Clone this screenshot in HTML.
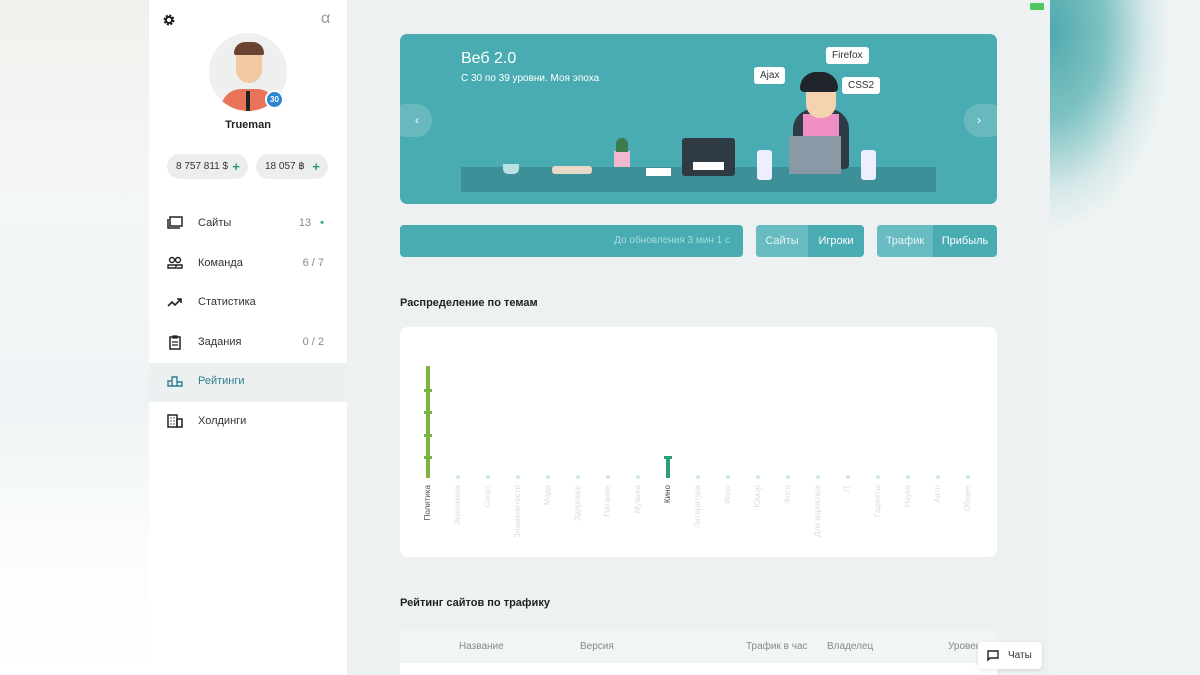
<!DOCTYPE html>
<html><head><meta charset="utf-8"><style>
*{margin:0;padding:0;box-sizing:border-box}
body{width:1200px;height:675px;overflow:hidden;position:relative;font-family:"Liberation Sans","DejaVu Sans",sans-serif;background:#f7f8f8}
.leftbg{position:absolute;left:0;top:0;width:150px;height:675px;background:linear-gradient(180deg,#f1f0ec 0%,#f4f7f7 30%,#eef4f5 60%,#fbfcfc 80%,#fff 100%)}
.rightbg{position:absolute;left:1050px;top:0;width:150px;height:675px;background:radial-gradient(ellipse 120px 200px at 0px 30px,#4fa9ad 0%,#7fc2c3 45%,#d6e8e9 80%,#eef3f3 100%),#eef3f3}
.side{position:absolute;left:149px;top:0;width:198px;height:675px;background:#fff}
.main{position:absolute;left:347px;top:0;width:703px;height:675px;background:#edf1f1}
.t{position:absolute;white-space:nowrap}
.pill{position:absolute;top:154px;height:25px;border-radius:13px;background:#eceeee;font-size:10px;color:#333;line-height:25px;padding-left:9px}
.pill b{color:#2a9d6e;font-weight:bold;position:absolute;right:8px;font-size:13px}
.nav{position:absolute;left:0;width:198px;height:39px;font-size:11px;color:#333}
.nav span{position:absolute;left:49px;top:12px}
.nav i{position:absolute;right:23px;top:12px;font-style:normal;color:#888}
.nav svg{position:absolute;left:18px;top:11px}
.banner{position:absolute;left:400px;top:34px;width:597px;height:170px;border-radius:7px;background:#49acb2;overflow:hidden}
.bar{position:absolute;top:225px;height:32px;border-radius:4px;background:#49acb2;color:#fff;font-size:11px;line-height:32px}
.card{position:absolute;left:400px;top:327px;width:597px;height:230px;background:#fff;border-radius:8px}
.bubble{position:absolute;background:#fff;color:#333;font-size:10px;padding:3px 6px;border-radius:3px}
.lab{position:absolute;top:485px;transform-origin:0 0;transform:rotate(-90deg) translateX(-100%);font-size:8px;color:#ddd;white-space:nowrap}
.dot{position:absolute;top:475px;width:4px;height:4px;border-radius:2px;background:#cde7e3}
</style></head><body>
<div class="leftbg"></div><div class="rightbg"></div>
<div class="side">
 <svg class="t" style="left:13px;top:13px" width="14" height="14" viewBox="0 0 14 14"><circle cx="7" cy="7" r="4.2" fill="none" stroke="#222" stroke-width="2.6" stroke-dasharray="2 1.3"/><circle cx="7" cy="7" r="3" fill="none" stroke="#222" stroke-width="2"/></svg>
 <div class="t" style="left:172px;top:10px;font-size:16px;color:#999">α</div>
 <div class="t" style="left:60px;top:33px;width:78px;height:78px;border-radius:50%;background:#eef0f0;overflow:hidden">
  <div class="t" style="left:12px;top:56px;width:56px;height:30px;border-radius:20px 20px 0 0;background:#e8745a"></div>
  <div class="t" style="left:37px;top:58px;width:4px;height:20px;background:#222"></div>
  <div class="t" style="left:27px;top:14px;width:26px;height:36px;border-radius:10px 10px 13px 13px;background:#f2c9a0"></div>
  <div class="t" style="left:25px;top:9px;width:30px;height:13px;border-radius:12px 12px 2px 2px;background:#6b4330"></div>
 </div>
 <div class="t" style="left:116px;top:90px;width:19px;height:19px;border-radius:50%;background:#2a86d1;color:#fff;font-size:8px;font-weight:bold;text-align:center;line-height:15px;border:2px solid #fff">30</div>
 <div class="t" style="left:0;width:198px;text-align:center;top:119px;font-size:11px;font-weight:bold;color:#222">Trueman</div>
 <div class="pill" style="left:18px;width:81px">8 757 811 $<b>+</b></div>
 <div class="pill" style="left:107px;width:72px">18 057 ฿<b>+</b></div>
 <div class="nav" style="top:205px"><svg width="16" height="14" viewBox="0 0 16 14"><rect x="3" y="1" width="12" height="9" fill="none" stroke="#222" stroke-width="1.5"/><path d="M1 3v9h12" fill="none" stroke="#222" stroke-width="1.5"/></svg><span>Сайты</span><i>13 <b style="color:#3aaa80;margin-left:6px">•</b></i></div>
 <div class="nav" style="top:245px"><svg width="16" height="14" viewBox="0 0 16 14"><circle cx="5" cy="4" r="2.5" fill="none" stroke="#222" stroke-width="1.4"/><circle cx="11" cy="4" r="2.5" fill="none" stroke="#222" stroke-width="1.4"/><path d="M1 12v-3h8v3zM9 9h6v3h-5" fill="none" stroke="#222" stroke-width="1.4"/></svg><span>Команда</span><i>6 / 7</i></div>
 <div class="nav" style="top:284px"><svg width="16" height="14" viewBox="0 0 16 14"><path d="M1 11l4-4 3 3 6-6M10 4h4v4" fill="none" stroke="#222" stroke-width="1.6"/></svg><span>Статистика</span></div>
 <div class="nav" style="top:324px"><svg width="16" height="15" viewBox="0 0 16 15"><rect x="3" y="2" width="10" height="12" fill="none" stroke="#222" stroke-width="1.5"/><path d="M6 1h4v2H6zM5 7h6M5 10h6" stroke="#222" stroke-width="1.3" fill="none"/></svg><span>Задания</span><i>0 / 2</i></div>
 <div class="nav" style="top:363px;background:#ecf0f0;color:#2f7f93"><svg width="16" height="14" viewBox="0 0 16 14"><path d="M1 12V7h4V3h5v5h5v4z M5 7v5M10 8v4" fill="none" stroke="#2f7f93" stroke-width="1.4"/></svg><span>Рейтинги</span></div>
 <div class="nav" style="top:403px"><svg width="16" height="14" viewBox="0 0 16 14"><rect x="1" y="1" width="9" height="12" fill="none" stroke="#222" stroke-width="1.5"/><rect x="10" y="5" width="5" height="8" fill="none" stroke="#222" stroke-width="1.5"/><path d="M3.5 4h1M6.5 4h1M3.5 7h1M6.5 7h1M3.5 10h1M6.5 10h1" stroke="#222" stroke-width="1.5"/></svg><span>Холдинги</span></div>
</div>
<div class="main"></div>
<div class="t" style="left:1030px;top:3px;width:14px;height:7px;background:#4cc860;border-radius:1px"></div>
<div class="banner">
 <div class="t" style="left:61px;top:16px;font-size:16px;color:#fff">Веб 2.0</div>
 <div class="t" style="left:61px;top:39px;font-size:10px;color:#fff">С 30 по 39 уровни. Моя эпоха</div>
 <div class="t" style="left:-10px;top:70px;width:42px;height:33px;border-radius:16px;background:#67b9be;color:#fff;font-size:12px;text-align:center;line-height:33px;padding-left:12px">‹</div>
 <div class="t" style="left:564px;top:70px;width:42px;height:33px;border-radius:16px;background:#67b9be;color:#fff;font-size:12px;line-height:33px;padding-left:13px">›</div>
 <div class="t" style="left:61px;top:133px;width:475px;height:25px;background:#3d8f98"></div>
 <div class="t" style="left:103px;top:130px;width:16px;height:10px;background:#b9e0e2;border-radius:0 0 5px 5px"></div>
 <div class="t" style="left:152px;top:132px;width:40px;height:8px;background:#e8d8c8;border-radius:3px"></div>
 <div class="t" style="left:214px;top:117px;width:16px;height:16px;background:#f2b8d0"></div>
 <div class="t" style="left:216px;top:104px;width:12px;height:14px;background:#3f7a4a;border-radius:6px 6px 0 0"></div>
 <div class="t" style="left:246px;top:134px;width:25px;height:8px;background:#fff"></div>
 <div class="t" style="left:282px;top:104px;width:53px;height:38px;background:#2e3b45;border-radius:3px"></div>
 <div class="t" style="left:293px;top:128px;width:31px;height:8px;background:#fff"></div>
 <div class="t" style="left:393px;top:75px;width:56px;height:60px;background:#2e3b45;border-radius:20px 20px 4px 4px"></div>
 <div class="t" style="left:403px;top:80px;width:36px;height:30px;background:#ef8fc3"></div>
 <div class="t" style="left:406px;top:44px;width:30px;height:40px;background:#f5d2b0;border-radius:10px 10px 14px 14px"></div>
 <div class="t" style="left:400px;top:38px;width:38px;height:20px;background:#1f252a;border-radius:16px 16px 4px 4px"></div>
 <div class="t" style="left:389px;top:102px;width:52px;height:38px;background:#8a99a6"></div>
 <div class="t" style="left:357px;top:116px;width:15px;height:30px;background:#eef;border-radius:3px"></div>
 <div class="t" style="left:461px;top:116px;width:15px;height:30px;background:#eef;border-radius:3px"></div>
 <div class="bubble" style="left:354px;top:33px">Ajax</div>
 <div class="bubble" style="left:426px;top:13px">Firefox</div>
 <div class="bubble" style="left:442px;top:43px">CSS2</div>
</div>
<div class="bar" style="left:400px;width:343px;text-align:right;padding-right:13px;color:#a7dadd;font-size:10px">До обновления 3 мин 1 с</div>
<div class="bar" style="left:756px;width:108px;overflow:hidden"><span class="t" style="left:0;width:52px;height:32px;background:#68bcc1;text-align:center;color:#e7f5f5">Сайты</span><span class="t" style="left:52px;width:56px;text-align:center">Игроки</span></div>
<div class="bar" style="left:877px;width:120px;overflow:hidden"><span class="t" style="left:0;width:56px;height:32px;background:#68bcc1;text-align:center;color:#e7f5f5">Трафик</span><span class="t" style="left:56px;width:64px;text-align:center">Прибыль</span></div>
<div class="t" style="left:400px;top:297px;font-size:11px;font-weight:bold;color:#222">Распределение по темам</div>
<div class="card"></div>
<div class="t" style="left:426px;top:366px;width:4px;height:112px;background:#7cb342"></div>
<div class="t" style="left:424px;top:389px;width:8px;height:3px;background:#7cb342"></div>
<div class="t" style="left:424px;top:411px;width:8px;height:3px;background:#7cb342"></div>
<div class="t" style="left:424px;top:434px;width:8px;height:3px;background:#7cb342"></div>
<div class="t" style="left:424px;top:456px;width:8px;height:3px;background:#7cb342"></div>
<div class="t" style="left:666px;top:457px;width:4px;height:21px;background:#2f9e76"></div>
<div class="t" style="left:664px;top:456px;width:8px;height:3px;background:#2f9e76"></div>
<div class="dot" style="left:456px"></div><div class="dot" style="left:486px"></div><div class="dot" style="left:516px"></div><div class="dot" style="left:546px"></div><div class="dot" style="left:576px"></div><div class="dot" style="left:606px"></div><div class="dot" style="left:636px"></div><div class="dot" style="left:696px"></div><div class="dot" style="left:726px"></div><div class="dot" style="left:756px"></div><div class="dot" style="left:786px"></div><div class="dot" style="left:816px"></div><div class="dot" style="left:846px"></div><div class="dot" style="left:876px"></div><div class="dot" style="left:906px"></div><div class="dot" style="left:936px"></div><div class="dot" style="left:966px"></div>
<div class="lab" style="left:423px;color:#555">Политика</div>
<div class="lab" style="left:453px">Экономика</div><div class="lab" style="left:483px">Спорт</div><div class="lab" style="left:513px">Знаменитости</div><div class="lab" style="left:543px">Мода</div><div class="lab" style="left:573px">Здоровье</div><div class="lab" style="left:603px">Питание</div><div class="lab" style="left:633px">Музыка</div>
<div class="lab" style="left:663px;color:#444">Кино</div>
<div class="lab" style="left:693px">Литература</div><div class="lab" style="left:723px">Игры</div><div class="lab" style="left:753px">Юмор</div><div class="lab" style="left:783px">Фото</div><div class="lab" style="left:813px">Для взрослых</div><div class="lab" style="left:843px">IT</div><div class="lab" style="left:873px">Гаджеты</div><div class="lab" style="left:903px">Наука</div><div class="lab" style="left:933px">Авто</div><div class="lab" style="left:963px">Общее</div>
<div class="t" style="left:400px;top:597px;font-size:11px;font-weight:bold;color:#222">Рейтинг сайтов по трафику</div>
<div class="t" style="left:400px;top:630px;width:597px;height:33px;background:#f2f5f5;border-radius:6px 6px 0 0"></div>
<div class="t" style="left:400px;top:663px;width:597px;height:12px;background:#fff"></div>
<div class="t" style="left:459px;top:641px;font-size:10px;color:#888">Название</div>
<div class="t" style="left:580px;top:641px;font-size:10px;color:#888">Версия</div>
<div class="t" style="left:746px;top:641px;font-size:10px;color:#888">Трафик в час</div>
<div class="t" style="left:827px;top:641px;font-size:10px;color:#888">Владелец</div>
<div class="t" style="left:948px;top:641px;font-size:10px;color:#888">Уровень</div>
<div class="t" style="left:978px;top:642px;width:64px;height:27px;background:#fff;border-radius:4px;box-shadow:0 1px 4px rgba(0,0,0,.12);font-size:10px;color:#333;line-height:27px;padding-left:30px">Чаты</div>
<svg class="t" style="left:987px;top:650px" width="12" height="12" viewBox="0 0 12 12"><path d="M1 1h10v7H3l-2 2z" fill="none" stroke="#222" stroke-width="1.4"/></svg>
</body></html>
